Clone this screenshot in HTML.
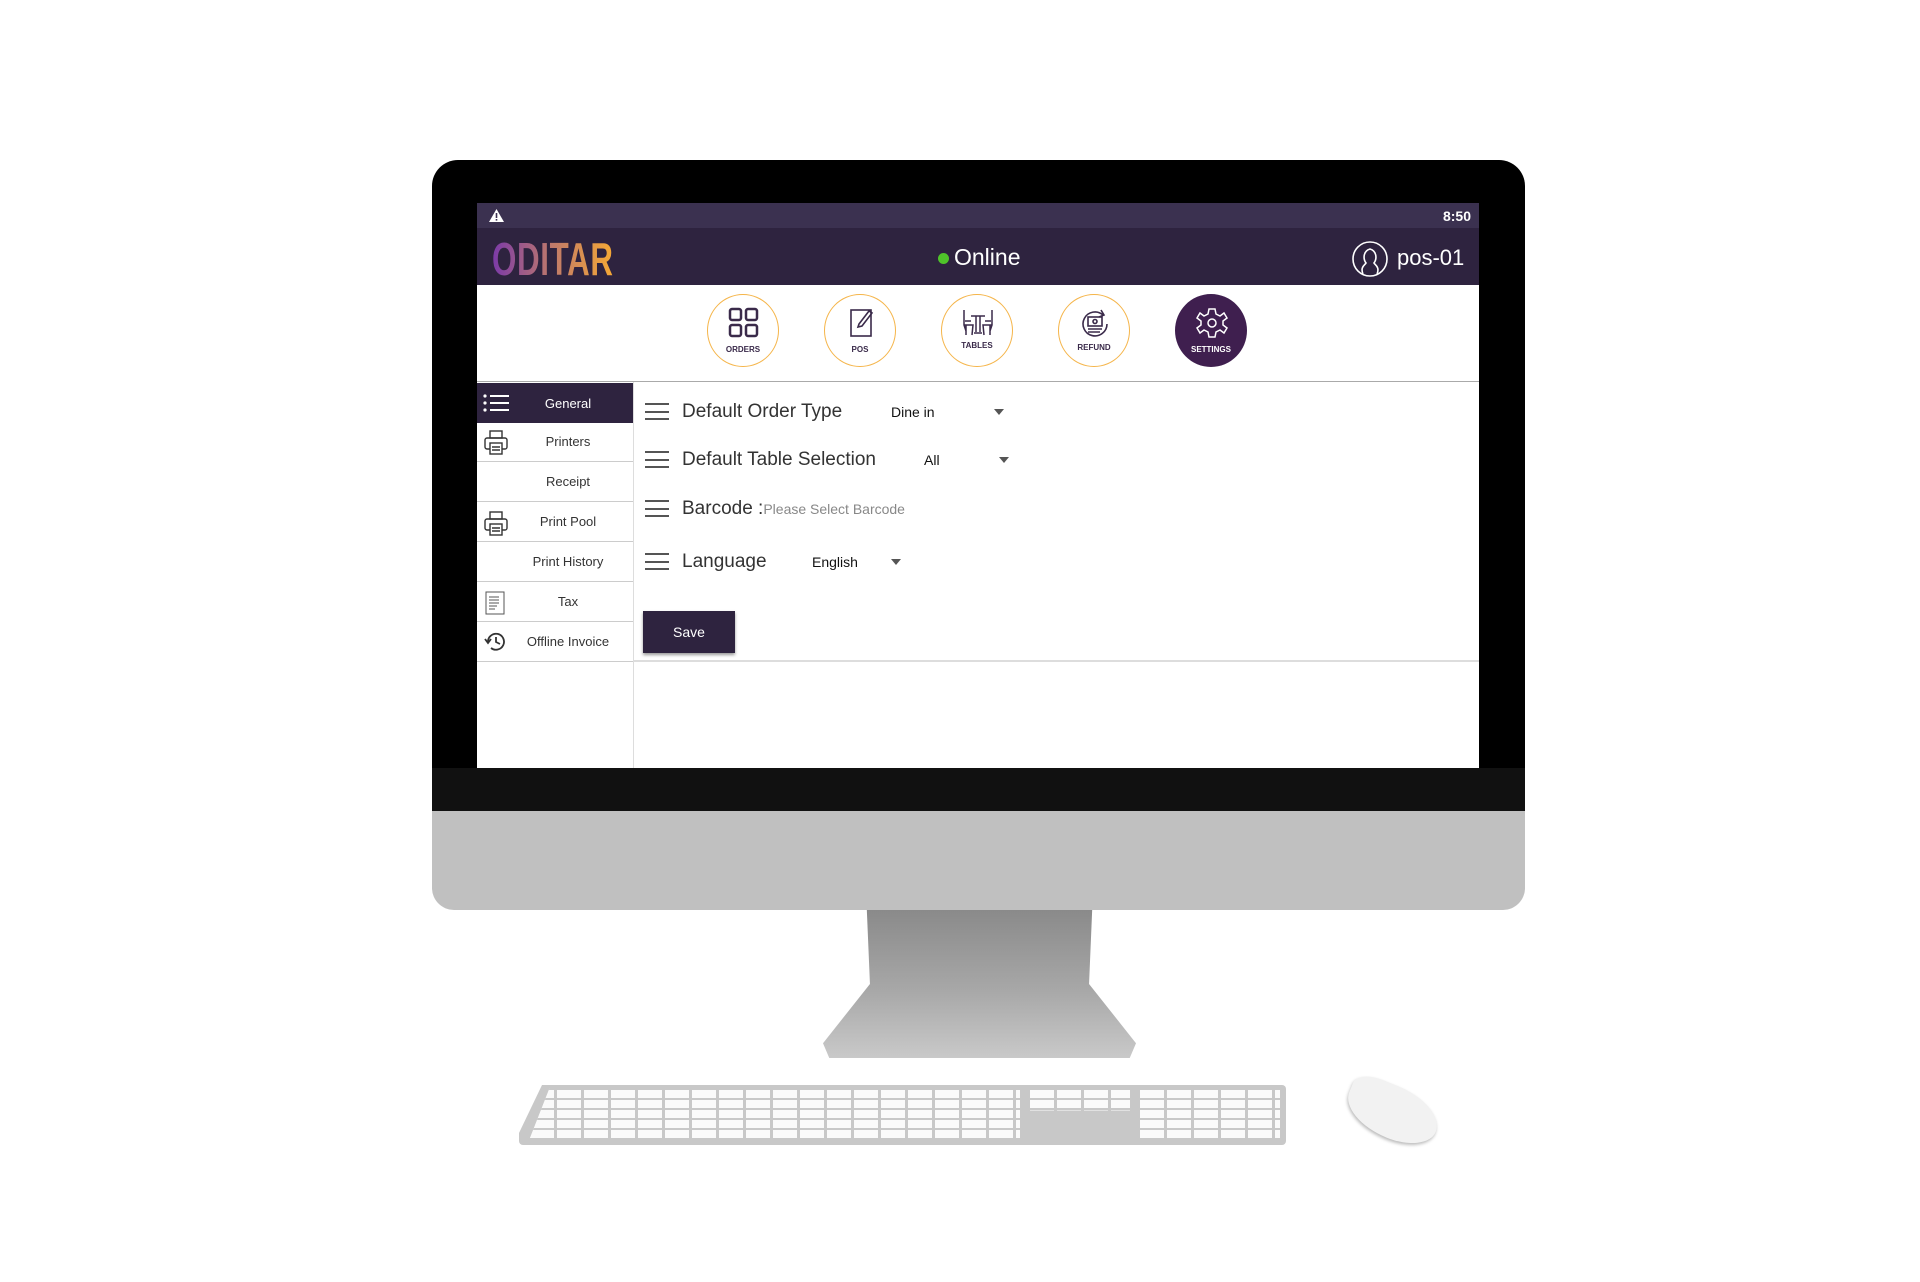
<!DOCTYPE html>
<html><head><meta charset="utf-8"><style>
*{margin:0;padding:0;box-sizing:border-box}
body{width:1920px;height:1282px;background:#fff;position:relative;overflow:hidden;font-family:"Liberation Sans",sans-serif}
.a{position:absolute}
.row{position:absolute;left:0;width:156px;height:40px;border-bottom:1px solid #ccc;font-size:13px;color:#333;display:flex;align-items:center;justify-content:center;padding-left:26px}
.circ{position:absolute;top:294px;width:72px;height:73px;border-radius:50%;border:1.5px solid #f5b54a;background:#fff;font-size:8px;font-weight:bold;color:#3a2a4a;text-align:center}
.circ svg{position:absolute;left:20px;top:12px}
.circ span{position:absolute;left:0;right:0;top:50px}
.lbl{position:absolute;left:682px;font-size:19px;color:#333}
.ham{position:absolute;left:645px;width:24px;height:17px;border-top:2px solid #555;border-bottom:2px solid #555}
.ham:after{content:"";position:absolute;left:0;right:0;top:5.5px;border-top:2px solid #555}
.dd{position:absolute;font-size:14px;color:#111}
.tri{position:absolute;width:0;height:0;border-left:5px solid transparent;border-right:5px solid transparent;border-top:6px solid #555}
.keys{position:absolute;background:repeating-linear-gradient(0deg,#fafafa 0 8px,#c8c8c8 8px 10px),#fafafa}
.keys:after{content:"";position:absolute;inset:0;background:repeating-linear-gradient(90deg,transparent 0 24px,#c8c8c8 24px 27px)}
</style></head><body>
<!-- monitor -->
<div class="a" style="left:432px;top:160px;width:1093px;height:651px;background:#000;border-radius:26px 26px 0 0"></div>
<div class="a" style="left:432px;top:768px;width:1093px;height:43px;background:#111"></div>
<div class="a" style="left:432px;top:811px;width:1093px;height:99px;background:#c0c0c0;border-radius:0 0 22px 22px"></div>
<div class="a" style="left:823px;top:910px;width:313px;height:148px;background:linear-gradient(#8a8a8a,#a8a8a8 55%,#c9c9c9);clip-path:polygon(14% 0,86% 0,85% 50%,100% 90%,98% 100%,2% 100%,0 90%,15% 50%);"></div>
<!-- keyboard -->
<div class="a" style="left:519px;top:1085px;width:767px;height:60px;background:#c8c8c8;border-radius:4px;clip-path:polygon(3% 0,100% 0,100% 100%,0 100%,0 80%)"></div>
<div class="keys" style="left:530px;top:1088px;width:490px;height:50px;clip-path:polygon(4% 0,100% 0,100% 100%,0 100%)"></div>
<div class="keys" style="left:1030px;top:1088px;width:100px;height:50px;clip-path:polygon(0 0,100% 0,100% 45%,0 45%)"></div>
<div class="keys" style="left:1140px;top:1088px;width:140px;height:50px"></div>
<div class="a" style="left:1345px;top:1086px;width:95px;height:52px;background:#f2f2f2;border-radius:30% 60% 50% 60%;transform:rotate(22deg);box-shadow:0 2px 3px #bbb"></div>
<!-- screen -->
<div class="a" style="left:477px;top:203px;width:1002px;height:565px;background:#fff;overflow:hidden">
 <div class="a" style="left:0;top:0;width:1002px;height:25px;background:#3b3150"></div>
 <svg class="a" style="left:12px;top:6px" width="15" height="13"><path d="M7.5 0 L15 13 L0 13Z" fill="#fff"/><rect x="6.7" y="4" width="1.6" height="5" fill="#3b3150"/><rect x="6.7" y="10" width="1.6" height="1.6" fill="#3b3150"/></svg>
 <div class="a" style="right:8px;top:5px;color:#fff;font-size:14px;font-weight:bold">8:50</div>
 <div class="a" style="left:0;top:25px;width:1002px;height:57px;background:#2e233f"></div>
 <div class="a" style="left:15px;top:29px;font-size:46px;font-weight:bold;letter-spacing:1px;transform:scaleX(.68);transform-origin:left;background:linear-gradient(90deg,#7b3aa8,#c07a6a 50%,#f6a935);-webkit-background-clip:text;color:transparent">ODITAR</div>
 <div class="a" style="left:461px;top:50px;width:11px;height:11px;border-radius:50%;background:#4fc32a"></div>
 <div class="a" style="left:477px;top:41px;color:#fff;font-size:23px">Online</div>
 <svg class="a" style="left:875px;top:38px" width="36" height="36" viewBox="0 0 36 36" fill="none" stroke="#fff" stroke-width="1.6"><circle cx="18" cy="18" r="17"/><path d="M11 33 C8 26 13 24 14 22 C11 18 11 10 18 8 C25 10 25 18 22 22 C23 24 28 26 25 33"/></svg>
 <div class="a" style="left:920px;top:42px;color:#fff;font-size:22px">pos-01</div>
 <div class="a" style="left:0;top:178px;width:1002px;height:1px;background:#aaa"></div>
 <div class="a" style="left:156px;top:179px;width:1px;height:386px;background:#ddd"></div>
 <div class="a" style="left:157px;top:457px;width:845px;height:2px;background:#ddd"></div>
</div>
<!-- nav circles -->
<div class="circ" style="left:707px"><svg width="32" height="32" viewBox="0 0 32 32" fill="none" stroke="#3a2a4a" stroke-width="2.5"><rect x="2" y="2" width="11" height="11" rx="2"/><rect x="18" y="2" width="11" height="11" rx="2"/><rect x="2" y="18" width="11" height="11" rx="2"/><rect x="18" y="18" width="11" height="11" rx="2"/></svg><span>ORDERS</span></div>
<div class="circ" style="left:824px"><svg width="32" height="32" viewBox="0 0 32 32" fill="none" stroke="#3a2a4a" stroke-width="1.6"><rect x="6" y="3" width="20" height="26"/><path d="M14 17 L24 4 L27 6 L17 19 L13 20Z"/></svg><span>POS</span></div>
<div class="circ" style="left:941px"><svg width="32" height="32" viewBox="0 0 32 32" fill="none" stroke="#3a2a4a" stroke-width="1.5"><path d="M2 3 V18 L4 24 M4 18 V28 M2 18 H11 L10 28 M3 14 H9 M30 3 V18 L28 24 M28 18 V28 M30 18 H21 L22 28 M29 14 H23 M9 9 H23 M14 9 V25 M18 9 V25 M12 26 H20"/></svg><span style="top:46px">TABLES</span></div>
<div class="circ" style="left:1058px"><svg width="32" height="32" viewBox="0 0 32 32" fill="none" stroke="#3a2a4a" stroke-width="1.6"><path d="M24 8 A12 12 0 1 0 28 17"/><path d="M22 3 L25 8 L20 10"/><rect x="9" y="10" width="14" height="9"/><circle cx="16" cy="14.5" r="2"/><path d="M9 22 H23 M9 25 H21"/></svg><span style="top:48px">REFUND</span></div>
<div class="circ" style="left:1175px;background:#3f1f4f;border-color:#3f1f4f;color:#fff"><svg width="32" height="32" viewBox="0 0 32 32" fill="none" stroke="#fff" stroke-width="1.5"><path d="M13 2 H19 L20 7 L24 9 L28 6 L31 11 L27 14 V18 L31 21 L28 26 L24 23 L20 25 L19 30 H13 L12 25 L8 23 L4 26 L1 21 L5 18 V14 L1 11 L4 6 L8 9 L12 7Z"/><circle cx="16" cy="16" r="4"/></svg><span>SETTINGS</span></div>
<!-- sidebar -->
<div class="a" style="left:477px;top:382px;width:157px;height:280px">
 <div class="row" style="top:1px;background:#2e233f;color:#fff;border:none">General</div>
 <div class="row" style="top:40px">Printers</div>
 <div class="row" style="top:80px">Receipt</div>
 <div class="row" style="top:120px">Print Pool</div>
 <div class="row" style="top:160px">Print History</div>
 <div class="row" style="top:200px">Tax</div>
 <div class="row" style="top:240px">Offline Invoice</div>
 <svg class="a" style="left:6px;top:12px" width="27" height="18" fill="#fff"><circle cx="2" cy="2" r="1.6"/><circle cx="2" cy="9" r="1.6"/><circle cx="2" cy="16" r="1.6"/><rect x="7" y="1" width="19" height="2"/><rect x="7" y="8" width="19" height="2"/><rect x="7" y="15" width="19" height="2"/></svg>
 <svg class="a" style="left:7px;top:48px" width="24" height="26" fill="none" stroke="#333" stroke-width="1.4"><rect x="6" y="1" width="12" height="7"/><rect x="1" y="8" width="22" height="11" rx="2"/><rect x="6" y="13" width="12" height="11" fill="#fff"/><path d="M8 17H16M8 20H16"/></svg>
 <svg class="a" style="left:7px;top:129px" width="24" height="26" fill="none" stroke="#333" stroke-width="1.4"><rect x="6" y="1" width="12" height="7"/><rect x="1" y="8" width="22" height="11" rx="2"/><rect x="6" y="13" width="12" height="11" fill="#fff"/><path d="M8 17H16M8 20H16"/></svg>
 <svg class="a" style="left:8px;top:208px" width="20" height="26" fill="none" stroke="#555" stroke-width="1"><path d="M1 2 H19 V24 H1Z"/><path d="M4 7H14M4 10H14M4 13H14M4 16H12M4 19H10"/></svg>
 <svg class="a" style="left:6px;top:249px" width="24" height="22" fill="none" stroke="#333" stroke-width="1.8"><path d="M5 11 A8 8 0 1 1 8 17"/><path d="M2 8 L5 12 L8 8"/><path d="M13 6 V11 L17 13"/></svg>
</div>
<!-- content -->
<div class="ham" style="top:403px"></div><div class="lbl" style="top:401px">Default Order Type</div>
<div class="dd" style="left:891px;top:404px">Dine in</div><div class="tri" style="left:994px;top:409px"></div>
<div class="ham" style="top:451px"></div><div class="lbl" style="top:449px">Default Table Selection</div>
<div class="dd" style="left:924px;top:452px">All</div><div class="tri" style="left:999px;top:457px"></div>
<div class="ham" style="top:500px"></div><div class="lbl" style="top:498px">Barcode :<span style="font-size:14px;color:#888">Please Select Barcode</span></div>
<div class="ham" style="top:553px"></div><div class="lbl" style="top:551px">Language</div>
<div class="dd" style="left:812px;top:554px">English</div><div class="tri" style="left:891px;top:559px"></div>
<div class="a" style="left:643px;top:611px;width:92px;height:42px;background:#2e233f;color:#fff;font-size:14px;display:flex;align-items:center;justify-content:center;box-shadow:0 2px 3px #999">Save</div>
</body></html>
